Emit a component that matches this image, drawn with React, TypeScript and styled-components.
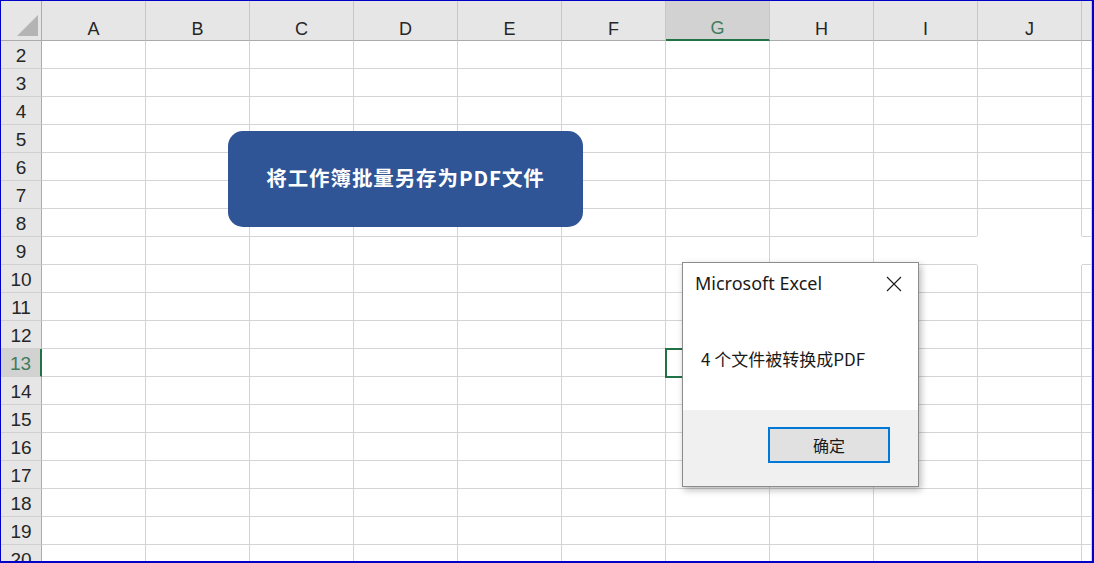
import React from "react";
import styled, { createGlobalStyle, css } from "styled-components";

const GlobalStyle = createGlobalStyle`
  html, body {
    margin: 0;
    padding: 0;
    background: #fff;
  }
`;

const COLUMNS = ["A", "B", "C", "D", "E", "F", "G", "H", "I", "J", ""];
const ROWS = Array.from({ length: 19 }, (_, i) => i + 2);
const ACTIVE_COL = "G";
const ACTIVE_ROW = 13;

const Frame = styled.div`
  position: relative;
  width: 1094px;
  height: 563px;
  box-sizing: border-box;
  border: solid #0000c8;
  border-width: 1px 2px 2px 1px;
  overflow: hidden;
  background: #fff;
`;

const Sheet = styled.div`
  display: grid;
  grid-template-columns: 41px repeat(10, 104px) 1fr;
  grid-template-rows: 40px;
  grid-auto-rows: 28px;
  font-family: "Liberation Sans", Arial, sans-serif;
  color: #262626;
`;

const Corner = styled.div`
  display: flex;
  align-items: flex-end;
  justify-content: flex-end;
  padding: 0 3px 4px 0;
  box-sizing: border-box;
  background: #e6e6e6;
  border-right: 1px solid #ababab;
  border-bottom: 1px solid #ababab;
`;

const Triangle = styled.div`
  width: 21px;
  height: 21px;
  background: #b4b4b4;
  clip-path: polygon(100% 0, 100% 100%, 0 100%);
`;

const ColHeader = styled.div<{ $active?: boolean }>`
  display: flex;
  align-items: flex-end;
  justify-content: center;
  box-sizing: border-box;
  background: #e6e6e6;
  border-right: 1px solid #c6c6c6;
  border-bottom: 1px solid #ababab;
  font-size: 18px;
  ${(p) =>
    p.$active &&
    css`
      background: #d2d2d2;
      color: #3f7d5c;
      border-bottom: 2px solid #217346;
    `}
`;

const RowHeader = styled.div<{ $active?: boolean }>`
  display: flex;
  align-items: center;
  justify-content: center;
  padding-top: 3px;
  box-sizing: border-box;
  background: #e6e6e6;
  border-right: 1px solid #ababab;
  border-bottom: 1px solid #d0d0d0;
  font-size: 19px;
  ${(p) =>
    p.$active &&
    css`
      background: #d2d2d2;
      color: #3f7d5c;
      border-right: 2px solid #217346;
    `}
`;

const Cell = styled.div<{ $selected?: boolean }>`
  box-sizing: border-box;
  border-right: 1px solid #d4d4d4;
  border-bottom: 1px solid #d4d4d4;
  ${(p) =>
    p.$selected &&
    css`
      outline: 2px solid #217346;
      outline-offset: -1px;
      position: relative;
      z-index: 1;
    `}
`;

// blank shape sitting over J9 (hides its grid lines)
const BlankPatch = styled.div`
  position: absolute;
  left: 976px;
  top: 235px;
  width: 105px;
  height: 29px;
  background: #fff;
  z-index: 2;
`;

const MacroButton = styled.button`
  position: absolute;
  left: 227px;
  top: 130px;
  width: 355px;
  height: 96px;
  padding: 0 0 4px;
  border: none;
  border-radius: 15px;
  background: #2f5597;
  color: #fff;
  font-family: "Noto Sans CJK SC", "Liberation Sans", sans-serif;
  font-weight: 700;
  font-size: 20.5px;
  letter-spacing: 0.9px;
  cursor: pointer;
  z-index: 3;
`;

const Dialog = styled.div`
  position: absolute;
  left: 681px;
  top: 261px;
  width: 237px;
  height: 225px;
  box-sizing: border-box;
  display: flex;
  flex-direction: column;
  background: #fff;
  border: 1px solid #8c8c8c;
  box-shadow: 2px 3px 7px rgba(0, 0, 0, 0.28);
  z-index: 4;
`;

const TitleBar = styled.div`
  height: 45px;
  box-sizing: border-box;
  display: flex;
  align-items: center;
  justify-content: space-between;
  padding: 0 16px 5px 12px;
  font-family: "Noto Sans", "Open Sans", sans-serif;
  font-size: 18px;
  color: #1a1a1a;
`;

const CloseButton = styled.span`
  display: flex;
  width: 16px;
  height: 16px;
  margin-top: 2px;
`;

const Message = styled.div`
  flex: 1;
  display: flex;
  align-items: center;
  padding-left: 18px;
  padding-bottom: 2px;
  font-family: "Noto Sans CJK SC", "Liberation Sans", sans-serif;
  font-size: 17px;
  color: #1a1a1a;
`;

const Footer = styled.div`
  height: 76px;
  box-sizing: border-box;
  display: flex;
  justify-content: flex-end;
  align-items: flex-start;
  padding: 17px 28px 0 0;
  background: #f0f0f0;
`;

const OkButton = styled.button`
  width: 122px;
  height: 36px;
  box-sizing: border-box;
  border: 2px solid #0078d7;
  background: #e1e1e1;
  font-family: "Noto Sans CJK SC", sans-serif;
  font-size: 16px;
  color: #1a1a1a;
  padding: 0;
`;

function CloseIcon() {
  return (
    <svg width="16" height="16" viewBox="0 0 16 16">
      <path d="M1 1 L15 15 M15 1 L1 15" stroke="#1a1a1a" strokeWidth="1.1" fill="none" />
    </svg>
  );
}

export default function App() {
  return (
    <Frame>
      <GlobalStyle />
      <Sheet>
        <Corner>
          <Triangle />
        </Corner>
        {COLUMNS.map((c, i) => (
          <ColHeader key={`h${i}`} $active={c === ACTIVE_COL}>
            {c}
          </ColHeader>
        ))}
        {ROWS.map((r) => (
          <React.Fragment key={r}>
            <RowHeader $active={r === ACTIVE_ROW}>{r}</RowHeader>
            {COLUMNS.map((c, i) => (
              <Cell
                key={`${r}-${i}`}
                $selected={r === ACTIVE_ROW && c === ACTIVE_COL}
              />
            ))}
          </React.Fragment>
        ))}
      </Sheet>
      <BlankPatch />
      <MacroButton>将工作簿批量另存为PDF文件</MacroButton>
      <Dialog>
        <TitleBar>
          Microsoft Excel
          <CloseButton>
            <CloseIcon />
          </CloseButton>
        </TitleBar>
        <Message>4 个文件被转换成PDF</Message>
        <Footer>
          <OkButton>确定</OkButton>
        </Footer>
      </Dialog>
    </Frame>
  );
}
